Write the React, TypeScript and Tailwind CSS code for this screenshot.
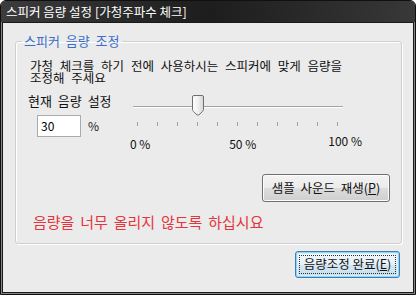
import React from 'react';

const ticks = Array.from({ length: 11 }, (_, i) => i);

const Thumb: React.FC = () => (
  <svg width="12" height="21" viewBox="0 0 12 21" className="absolute left-[62px] top-0">
    <defs>
      <linearGradient id="thumbFill" x1="0" y1="0" x2="1" y2="0">
        <stop offset="0" stopColor="#ffffff" />
        <stop offset="0.5" stopColor="#f0f0f0" />
        <stop offset="1" stopColor="#d6d6d6" />
      </linearGradient>
    </defs>
    <path
      d="M2 0.5 H10 Q11.5 0.5 11.5 2 V14.5 Q11.5 15.5 10.5 16.5 L7 19.8 Q6 20.5 5 19.8 L1.5 16.5 Q0.5 15.5 0.5 14.5 V2 Q0.5 0.5 2 0.5 Z"
      fill="url(#thumbFill)"
      stroke="#6f6f6f"
      strokeWidth="1"
    />
  </svg>
);

const Slider: React.FC = () => (
  <div className="relative w-[232px] h-[52px]">
    <div className="mt-[11px] ml-[3px] w-[210px] h-[2px] border-t border-[#a3a3a3] bg-white" />
    <div className="flex justify-between w-[201px] ml-[7px] mt-[14px]">
      {ticks.map((t) => (
        <span key={t} className="w-px h-[4px] bg-[#a0a0a0]" />
      ))}
    </div>
    <div className="flex mt-[12px] text-[12px] leading-[12px] text-[#111] whitespace-nowrap">
      <span className="w-[100px]">0 %</span>
      <span className="w-[100px]">50 %</span>
      <span className="-mt-[3px]">100 %</span>
    </div>
    <Thumb />
  </div>
);

export default function App() {
  return (
    <div className="w-[419px] h-[297px] bg-white font-['Noto_Sans_CJK_KR',sans-serif]">
      <div className="w-[416px] h-[295px] flex flex-col border border-[#101010] rounded-t-[6px] bg-[#858585] overflow-hidden">
        {/* title bar */}
        <div className="h-[21px] shrink-0 flex items-center pl-[5px] bg-gradient-to-r from-[#3c3c3c] via-[#1d1d1d] to-[#383838]">
          <span className="text-white text-[12.5px] leading-[14px]">스피커 음량 설정 [가청주파수 체크]</span>
        </div>

        {/* client area */}
        <div className="flex-1 mx-px mb-px border border-[#1a1a1a] bg-[#ebebeb] flex flex-col">
          <fieldset className="ml-[12px] mt-[10px] w-[387px] h-[211px] border border-[#cfcfcf] rounded-[3px] shadow-[inset_1px_1px_0_#ffffff,1px_1px_0_#ffffff]">
            <legend className="ml-[6px] px-[2px] text-[13px] leading-[16px] text-[#3c6ec8] [word-spacing:3px]">
              스피커 음량 조정
            </legend>

            <div className="ml-[14px] mt-[11px] flex flex-col text-[12.5px] text-[#111] [word-spacing:4px]">
              <span className="block h-[12px] leading-[12px]">가청 체크를 하기 전에 사용하시는 스피커에 맞게 음량을</span>
              <span className="block h-[12px] leading-[12px]">조정해 주세요</span>
            </div>

            <div className="flex ml-[12px] mt-[11px]">
              <div className="w-[102px] flex flex-col">
                <span className="text-[13px] leading-[12px] text-[#111] [word-spacing:3px]">현재 음량 설정</span>
                <div className="flex items-center mt-[8px] ml-[9px]">
                  <div className="w-[44px] h-[22px] border border-[#a9abb1] bg-white pl-[3px] text-[12px] leading-[20px] text-black">
                    30
                  </div>
                  <span className="ml-[7px] text-[12px] text-[#222]">%</span>
                </div>
              </div>
              <Slider />
            </div>

            <div className="flex justify-end mr-[11px] mt-[27px]">
              <button className="w-[128px] h-[28px] rounded-[3px] border border-[#707070] bg-[linear-gradient(#f3f3f3_0%,#ebebeb_50%,#dddddd_50%,#cfcfcf_100%)] shadow-[inset_0_0_0_1px_#fcfcfc] text-[12.5px] text-[#111] [word-spacing:3px]">
                샘플 사운드 재생(<span className="underline">P</span>)
              </button>
            </div>

            <p className="ml-[17px] mt-[12px] text-[15px] leading-[15px] text-[#e4343c] [word-spacing:2.5px]">
              음량을 너무 올리지 않도록 하십시요
            </p>
          </fieldset>

          <div className="flex justify-end mr-[13px] mt-[7px]">
            <button className="w-[105px] h-[27px] rounded-[3px] border border-[#3c7fb1] bg-[linear-gradient(#f1f7fb_0%,#e5f0f7_50%,#d4e6f1_50%,#c8dfee_100%)] shadow-[inset_0_0_0_1px_#8dd6f7,inset_0_0_0_2px_#d8eef9] p-[3px]">
              <span className="flex items-center justify-center w-full h-full border border-dotted border-[#333] text-[12.5px] text-[#111]">
                음량조정 완료(<span className="underline">E</span>)
              </span>
            </button>
          </div>
        </div>
      </div>
    </div>
  );
}
